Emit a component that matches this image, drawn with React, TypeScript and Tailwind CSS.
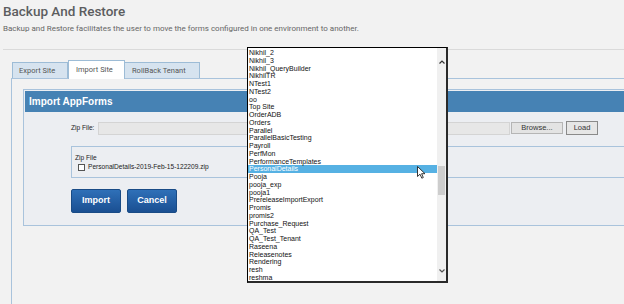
import React from "react"

const items = [
  "Nikhil_2", "Nikhil_3", "Nikhil_QueryBuilder", "NikhilTR", "NTest1", "NTest2", "oo", "Top Site",
  "OrderADB", "Orders", "Parallel", "ParallelBasicTesting", "Payroll", "PerfMon", "PerformanceTemplates",
  "PersonalDetails", "Pooja", "pooja_exp", "pooja1", "PrereleaseImportExport", "Promis", "promis2",
  "Purchase_Request", "QA_Test", "QA_Test_Tenant", "Raseena", "Releasenotes", "Rendering", "resh", "reshma",
]

function Dropdown() {
  return (
    <div className="absolute left-[247px] top-[47px] w-[201px] h-[236px] bg-white border border-black border-r-2 border-b-2 border-r-[#2a2a2a] border-b-[#2a2a2a] flex font-['Liberation_Sans',Arial,sans-serif]">
      <ul className="w-[189px] pt-px overflow-hidden">
        {items.map((it) => (
          <li
            key={it}
            className={
              it === "PersonalDetails"
                ? "h-[7.75px] leading-[7.75px] pl-[1px] text-[7px] bg-[#56b1e3] text-white"
                : "h-[7.75px] leading-[7.75px] pl-[1px] text-[7px] text-[#111]"
            }
          >
            {it}
          </li>
        ))}
      </ul>
      <div className="flex-1 bg-[#f0f0f0] relative">
        <svg className="absolute left-[2px] top-[12px]" width="6" height="4" viewBox="0 0 6 4">
          <polyline points="0.5,3.5 3,1 5.5,3.5" fill="none" stroke="#333" strokeWidth="1.2" />
        </svg>
        <div className="absolute left-[1px] top-[118px] w-[7px] h-[29px] bg-[#cdcdcd]" />
        <svg className="absolute left-[2px] top-[221px]" width="6" height="4" viewBox="0 0 6 4">
          <polyline points="0.5,0.5 3,3 5.5,0.5" fill="none" stroke="#555" strokeWidth="1.2" />
        </svg>
      </div>
    </div>
  )
}

function Cursor() {
  return (
    <svg className="absolute left-[417px] top-[166px]" width="9" height="13" viewBox="0 0 9 13">
      <path d="M0.5 0.5 L0.5 10.5 L3 8.2 L4.8 12.2 L6.3 11.5 L4.6 7.7 L8 7.7 Z" fill="white" stroke="#222" strokeWidth="0.9" strokeLinejoin="round" />
    </svg>
  )
}

export default function App() {
  return (
    <div className="w-[624px] h-[304px] bg-[#f2f2f2] overflow-hidden relative font-['Roboto',Arial,sans-serif]">
      <div className="pl-[3px] pt-[3px]">
        <h1 className="text-[13.5px] font-medium text-[#5c5d5f] leading-[16px]">Backup And Restore</h1>
        <p className="mt-[5px] text-[8px] leading-[10px] text-[#666]">
          Backup and Restore facilitates the user to move the forms configured in one environment to another.
        </p>
      </div>
      <div className="ml-[3px] mt-[15px] h-px bg-[#dadada]" />

      <div className="ml-[12px] mt-[10px] h-[18px] flex items-end text-[7.5px] text-[#555]">
        <div className="w-[56px] h-[16px] bg-[#d6e3ef] border border-b-0 border-[#9dbcd6] flex items-center pl-[6px]">Export Site</div>
        <div className="relative z-10 -mb-px w-[57px] h-[19px] bg-white border border-b-0 border-[#9dbcd6] flex items-start pt-[3px] pl-[7px]">Import Site</div>
        <div className="w-[75px] h-[16px] bg-[#d6e3ef] border border-b-0 border-l-0 border-[#9dbcd6] flex items-center pl-[7px]">RollBack Tenant</div>
      </div>

      <div className="ml-[11px] h-[240px] border-l border-t border-[#a9c3dc] pl-[11px] pt-[10px]">
        <div className="border border-r-0 border-[#a9c3dc] bg-[#eceef2] p-px pr-0">
          <div className="h-[21px] bg-[#4682b4] flex items-center pl-[4px] text-white font-bold text-[10px] font-['Liberation_Sans',Arial,sans-serif]">
            Import AppForms
          </div>
          <div className="pl-[46px] pt-[9px] pb-[11px] font-['Liberation_Sans',Arial,sans-serif] text-[6.6px] text-[#222]">
            <div className="flex items-center h-[14px]">
              <span className="w-[27px]">Zip File:</span>
              <div className="w-[412px] h-[13px] bg-[#e7e7e7] border border-[#d4d4d4]" />
              <button className="ml-px w-[52px] h-[12px] bg-[#e3e3e3] border border-[#b5b5b5] text-[7.5px] text-[#333] leading-none">Browse...</button>
              <button className="ml-[3px] w-[32px] h-[14px] bg-[#e6e6e6] border border-[#8a8a8a] text-[7.5px] text-[#333] leading-none">Load</button>
            </div>
            <div className="mt-[11px] w-[560px] h-[32px] border border-[#a9c3dc] pl-[3px] pt-[6px]">
              <div className="leading-[9px]">Zip File</div>
              <div className="mt-[1px] flex items-center pl-[3px] gap-[3px]">
                <span className="w-[7px] h-[7px] bg-white border border-[#555]" />
                <span className="leading-[8px]">PersonalDetails-2019-Feb-15-122209.zip</span>
              </div>
            </div>
            <div className="mt-[11px] flex gap-[6px]">
              <button className="w-[50px] h-[24px] rounded-[2px] bg-gradient-to-b from-[#2f70b8] to-[#1a4f92] border border-[#194b86] text-white font-bold text-[9px]">Import</button>
              <button className="w-[50px] h-[24px] rounded-[2px] bg-gradient-to-b from-[#2f70b8] to-[#1a4f92] border border-[#194b86] text-white font-bold text-[9px]">Cancel</button>
            </div>
          </div>
        </div>
      </div>

      <Dropdown />
      <Cursor />
    </div>
  )
}
